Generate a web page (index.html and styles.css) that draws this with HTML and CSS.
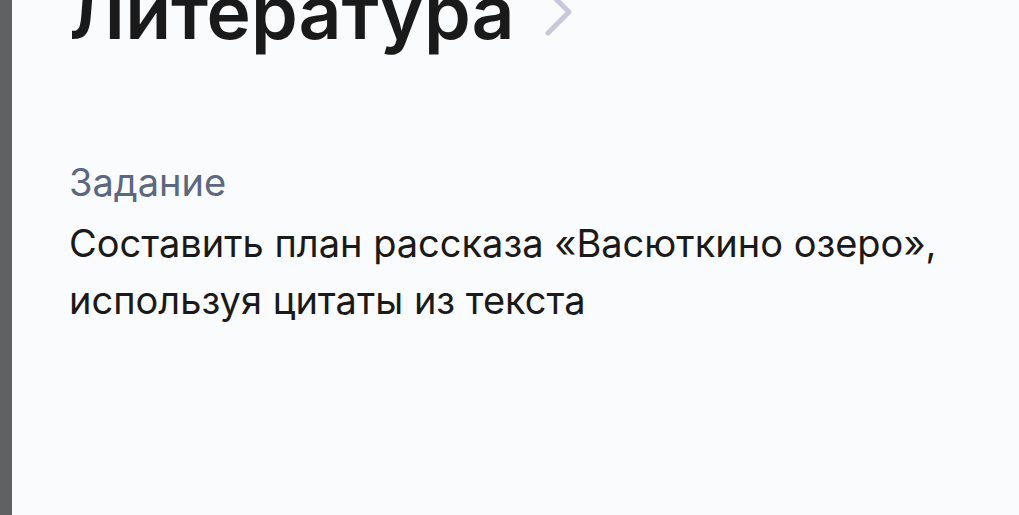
FILE: index.html
```html
<!DOCTYPE html>
<html lang="ru">
<head>
<meta charset="utf-8">
<link rel="stylesheet" href="styles.css">
</head>
<body>
<div class="page">
  <div class="strip"></div>
  <main class="content">
    <div class="title-row">
      <h1 class="title">Литература</h1>
      <svg class="chev" width="30" height="44" viewBox="0 0 30 44"><path d="M3 -9 L24 12 L3 33" fill="none" stroke="#c6c9dc" stroke-width="5" stroke-linecap="round" stroke-linejoin="round"/></svg>
    </div>
    <div class="label">Задание</div>
    <p class="task">Составить план рассказа «Васюткино озеро»,<br>используя цитаты из текста</p>
  </main>
</div>
</body>
</html>
```
FILE: styles.css
```css
html, body {
  margin: 0;
  padding: 0;
  height: 100%;
  overflow: hidden;
  background: #fafbfd;
}
.page {
  display: flex;
  height: 100%;
  font-family: Inter, "Noto Sans", sans-serif;
}
.strip {
  width: 12px;
  flex: none;
  background: #5f6062;
}
.content {
  flex: 1;
  padding-left: 57px;
}
.title-row {
  display: flex;
  align-items: flex-start;
  gap: 30px;
  margin-top: -38px;
}
.title {
  margin: 0;
  font-size: 75px;
  line-height: 100px;
  font-weight: 600;
  color: #1a1a1a;
}
.chev {
  margin-top: 38px;
  flex: none;
}
.label {
  margin-top: 98px;
  font-size: 38px;
  line-height: 44px;
  color: #5c6780;
}
.task {
  margin: 11px 0 0;
  font-size: 38px;
  line-height: 57px;
  color: #1a1a1a;
}
```
